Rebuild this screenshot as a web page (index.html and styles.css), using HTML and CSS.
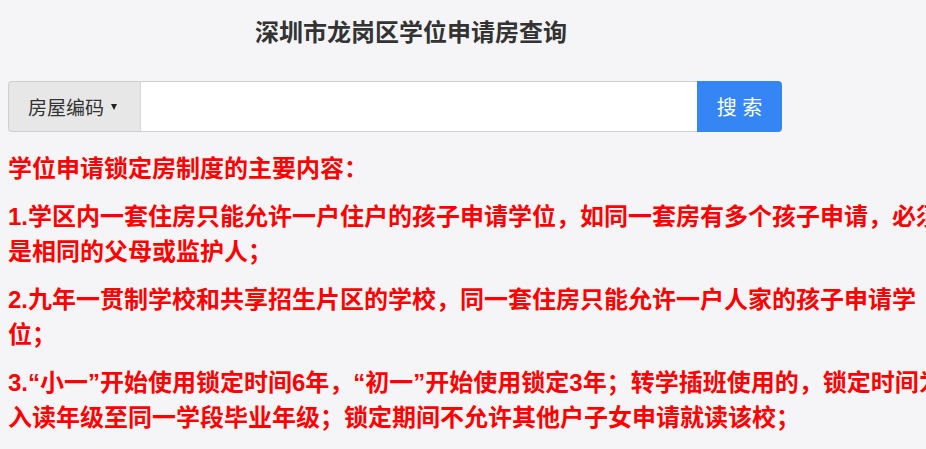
FILE: index.html
```html
<!DOCTYPE html>
<html lang="zh-CN">
<head>
<meta charset="utf-8">
<title>深圳市龙岗区学位申请房查询</title>
<link rel="stylesheet" href="styles.css">
</head>
<body>
  <div class="page">
    <h1 class="page-title">深圳市龙岗区学位申请房查询</h1>

    <form class="search-group" onsubmit="return false">
      <div class="search-type">房屋编码 <span class="caret"></span></div>
      <input class="search-input" type="text" aria-label="房屋编码">
      <button class="search-btn" type="submit">搜 索</button>
    </form>

    <div class="notice">
      <p class="notice-title">学位申请锁定房制度的主要内容：</p>
      <p>1.学区内一套住房只能允许一户住户的孩子申请学位，如同一套房有多个孩子申请，必须是相同的父母或监护人；</p>
      <p>2.九年一贯制学校和共享招生片区的学校，同一套住房只能允许一户人家的孩子申请学位；</p>
      <p>3.“小一”开始使用锁定时间6年，“初一”开始使用锁定3年；转学插班使用的，锁定时间为入读年级至同一学段毕业年级；锁定期间不允许其他户子女申请就读该校；</p>
    </div>
  </div>
</body>
</html>
```

FILE: styles.css
```css
html, body {
  margin: 0;
  padding: 0;
  overflow: hidden;
  background: #f5f5f7;
}

body {
  font-family: "Liberation Sans", "Noto Sans CJK SC", sans-serif;
  color: #333;
}

.page {
  padding: 0 8px;
}

.page-title {
  width: 806px;
  margin: 15px 0 30px;
  font-size: 24px;
  line-height: 36px;
  font-weight: 700;
  text-align: center;
  color: #333;
}

/* search bar: type dropdown + text field + button */
.search-group {
  display: flex;
  width: 774px;
  height: 51px;
  margin: 0;
}

.search-type {
  box-sizing: border-box;
  width: 132px;
  display: flex;
  align-items: center;
  gap: 7px;
  padding-left: 19px;
  background: #e7e7e8;
  border: 1px solid #cfcfd2;
  border-right: none;
  border-radius: 4px 0 0 4px;
  font-size: 19px;
  color: #333;
}

.caret {
  display: inline-block;
  width: 0;
  height: 0;
  border-top: 6px solid #222;
  border-left: 3px solid transparent;
  border-right: 3px solid transparent;
  margin-top: 1px;
}

.search-input {
  flex: 1;
  box-sizing: border-box;
  height: 51px;
  margin: 0;
  padding: 0 12px;
  border: 1px solid #cfcfd2;
  border-left: 1px solid #d8d8db;
  border-right: none;
  background: #fff;
  font-size: 18px;
  outline: none;
}

.search-btn {
  box-sizing: border-box;
  width: 85px;
  height: 51px;
  margin: 0;
  border: none;
  border-radius: 0 4px 4px 0;
  background: #3586f4;
  color: #fff;
  font-family: "Liberation Sans", "Noto Sans CJK SC", sans-serif;
  font-size: 20px;
  font-weight: 400;
  cursor: pointer;
}

/* red notice text */
.notice {
  width: 942px;
  margin-top: 19px;
  color: #ff0000;
  font-size: 24px;
  font-weight: 700;
  line-height: 35px;
}

.notice p {
  margin: 0 0 13px;
}
```
